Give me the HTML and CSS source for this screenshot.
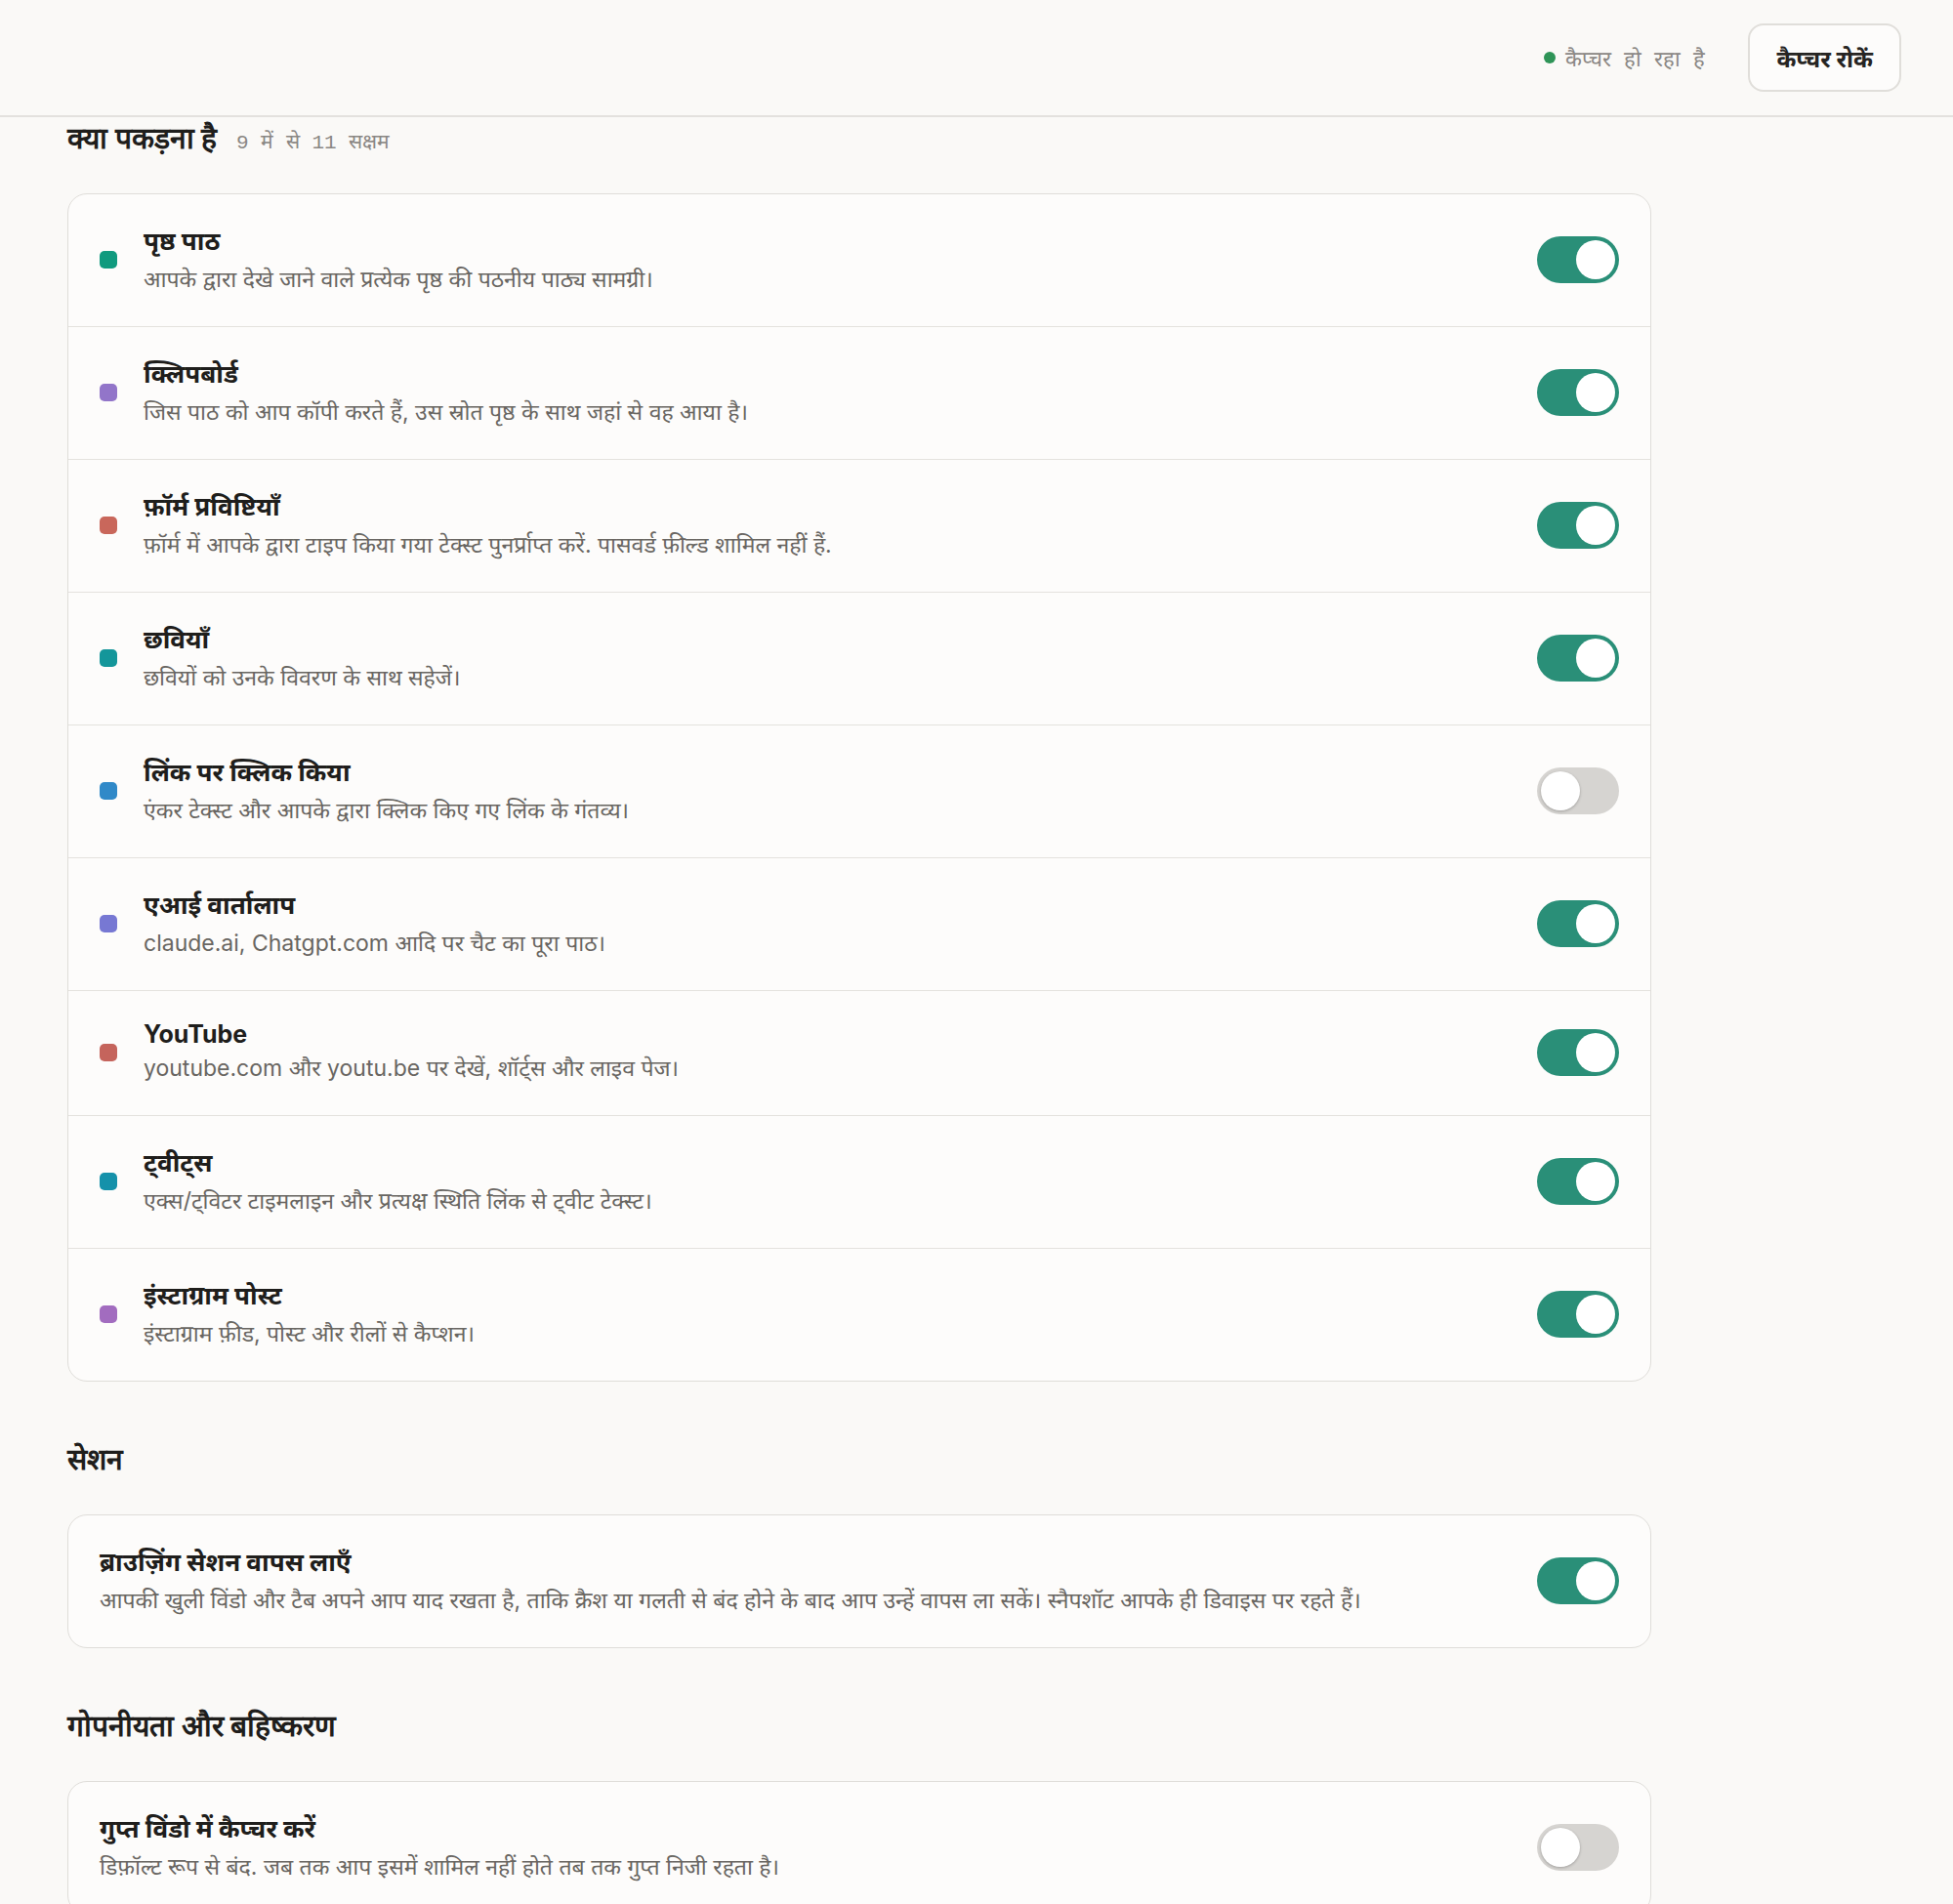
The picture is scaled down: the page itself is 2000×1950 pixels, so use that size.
FILE: index.html
```html
<!DOCTYPE html>
<html lang="hi">
<head>
  <meta charset="UTF-8">
  <meta name="viewport" content="width=device-width, initial-scale=1.0">
  <title>कैप्चर सेटिंग्स</title>
  <link rel="stylesheet" href="styles.css">
</head>
<body>
  <header class="topbar">
    <div class="status">
      <span class="status-dot"></span>
      <span class="status-text">कैप्चर हो रहा है</span>
    </div>
    <button type="button" class="stop-btn">कैप्चर रोकें</button>
  </header>

  <main class="page">
    <div class="section-head">
      <h2>क्या पकड़ना है</h2>
      <span class="section-meta">9 में से 11 सक्षम</span>
    </div>

    <div class="card">
      <div class="row">
        <span class="dot" style="background:#109a7e"></span>
        <div class="row-text">
          <div class="row-title">पृष्ठ पाठ</div>
          <div class="row-desc">आपके द्वारा देखे जाने वाले प्रत्येक पृष्ठ की पठनीय पाठ्य सामग्री।</div>
        </div>
        <span class="toggle on"></span>
      </div>
      <div class="row">
        <span class="dot" style="background:#9275c9"></span>
        <div class="row-text">
          <div class="row-title">क्लिपबोर्ड</div>
          <div class="row-desc">जिस पाठ को आप कॉपी करते हैं, उस स्रोत पृष्ठ के साथ जहां से वह आया है।</div>
        </div>
        <span class="toggle on"></span>
      </div>
      <div class="row">
        <span class="dot" style="background:#c9675b"></span>
        <div class="row-text">
          <div class="row-title">फ़ॉर्म प्रविष्टियाँ</div>
          <div class="row-desc">फ़ॉर्म में आपके द्वारा टाइप किया गया टेक्स्ट पुनर्प्राप्त करें. पासवर्ड फ़ील्ड शामिल नहीं हैं.</div>
        </div>
        <span class="toggle on"></span>
      </div>
      <div class="row">
        <span class="dot" style="background:#14969a"></span>
        <div class="row-text">
          <div class="row-title">छवियाँ</div>
          <div class="row-desc">छवियों को उनके विवरण के साथ सहेजें।</div>
        </div>
        <span class="toggle on"></span>
      </div>
      <div class="row">
        <span class="dot" style="background:#3089c8"></span>
        <div class="row-text">
          <div class="row-title">लिंक पर क्लिक किया</div>
          <div class="row-desc">एंकर टेक्स्ट और आपके द्वारा क्लिक किए गए लिंक के गंतव्य।</div>
        </div>
        <span class="toggle"></span>
      </div>
      <div class="row">
        <span class="dot" style="background:#7778d3"></span>
        <div class="row-text">
          <div class="row-title">एआई वार्तालाप</div>
          <div class="row-desc">claude.ai, Chatgpt.com आदि पर चैट का पूरा पाठ।</div>
        </div>
        <span class="toggle on"></span>
      </div>
      <div class="row">
        <span class="dot" style="background:#c5645c"></span>
        <div class="row-text">
          <div class="row-title latin">YouTube</div>
          <div class="row-desc">youtube.com और youtu.be पर देखें, शॉर्ट्स और लाइव पेज।</div>
        </div>
        <span class="toggle on"></span>
      </div>
      <div class="row">
        <span class="dot" style="background:#1591aa"></span>
        <div class="row-text">
          <div class="row-title">ट्वीट्स</div>
          <div class="row-desc">एक्स/ट्विटर टाइमलाइन और प्रत्यक्ष स्थिति लिंक से ट्वीट टेक्स्ट।</div>
        </div>
        <span class="toggle on"></span>
      </div>
      <div class="row">
        <span class="dot" style="background:#a26cbf"></span>
        <div class="row-text">
          <div class="row-title">इंस्टाग्राम पोस्ट</div>
          <div class="row-desc">इंस्टाग्राम फ़ीड, पोस्ट और रीलों से कैप्शन।</div>
        </div>
        <span class="toggle on"></span>
      </div>
    </div>

    <div class="section-head">
      <h2>सेशन</h2>
    </div>
    <div class="card">
      <div class="row plain">
        <div class="row-text">
          <div class="row-title">ब्राउज़िंग सेशन वापस लाएँ</div>
          <div class="row-desc">आपकी खुली विंडो और टैब अपने आप याद रखता है, ताकि क्रैश या गलती से बंद होने के बाद आप उन्हें वापस ला सकें। स्नैपशॉट आपके ही डिवाइस पर रहते हैं।</div>
        </div>
        <span class="toggle on"></span>
      </div>
    </div>

    <div class="section-head">
      <h2>गोपनीयता और बहिष्करण</h2>
    </div>
    <div class="card">
      <div class="row plain">
        <div class="row-text">
          <div class="row-title">गुप्त विंडो में कैप्चर करें</div>
          <div class="row-desc">डिफ़ॉल्ट रूप से बंद. जब तक आप इसमें शामिल नहीं होते तब तक गुप्त निजी रहता है।</div>
        </div>
        <span class="toggle"></span>
      </div>
    </div>
  </main>
</body>
</html>
```

FILE: styles.css
```css
body {
  margin: 0;
  font-family: Inter, "Noto Sans", sans-serif;
  background-color: #faf9f7;
  color: #1f1e1c;
}
.topbar {
  height: 118px;
  display: flex;
  justify-content: flex-end;
  align-items: center;
  gap: 44px;
  padding-right: 53px;
  border-bottom: 2px solid #e3e1de;
}
.status {
  display: flex;
  align-items: center;
  gap: 10px;
}
.status-dot {
  width: 12px;
  height: 12px;
  border-radius: 50%;
  background-color: #2e9457;
}
.status-text {
  font-family: "Liberation Mono", monospace;
  font-size: 22px;
  color: #8a8784;
}
.stop-btn {
  height: 70px;
  padding: 0 27px;
  background: #fdfcfb;
  border: 2px solid #e0deda;
  border-radius: 16px;
  font-family: inherit;
  font-size: 24px;
  font-weight: 700;
  color: #262422;
}
.page {
  max-width: 1622px;
  padding: 4px 0 0 69px;
}
.section-head {
  display: flex;
  align-items: baseline;
  gap: 20px;
  height: 36px;
  margin: 62px 0 38px;
}
.page > .section-head:first-child {
  margin-top: 0;
}
.section-head h2 {
  margin: 0;
  font-family: "Liberation Serif", serif;
  font-size: 30px;
  font-weight: 700;
  line-height: 36px;
}
.section-meta {
  font-family: "Liberation Mono", monospace;
  font-size: 21px;
  color: #8a8784;
}
.card {
  background: #fdfcfb;
  border: 1px solid #dfddd9;
  border-radius: 20px;
}
.row {
  display: grid;
  grid-template-columns: 18px 1fr 84px;
  align-items: center;
  gap: 27px;
  padding: 31px 32px 32px;
  border-bottom: 1px solid #e4e2de;
}
.row:last-child {
  border-bottom: none;
}
.row.plain {
  grid-template-columns: 1fr 84px;
}
.dot {
  width: 18px;
  height: 18px;
  border-radius: 5px;
}
.row-title {
  font-size: 26px;
  font-weight: 700;
  line-height: 34px;
}
.row-title.latin {
  font-size: 25px;
  line-height: 26px;
}
.row-desc {
  margin-top: 6px;
  font-size: 23px;
  line-height: 32px;
  color: #696662;
}
.toggle {
  position: relative;
  width: 84px;
  height: 48px;
  border-radius: 24px;
  background-color: #d6d4d1;
}
.toggle::after {
  content: "";
  position: absolute;
  top: 4px;
  left: 4px;
  width: 40px;
  height: 40px;
  border-radius: 50%;
  background: #ffffff;
  box-shadow: 0 1px 3px rgba(0, 0, 0, 0.25);
}
.toggle.on {
  background-color: #2a8f78;
}
.toggle.on::after {
  left: 40px;
  box-shadow: none;
}
```
